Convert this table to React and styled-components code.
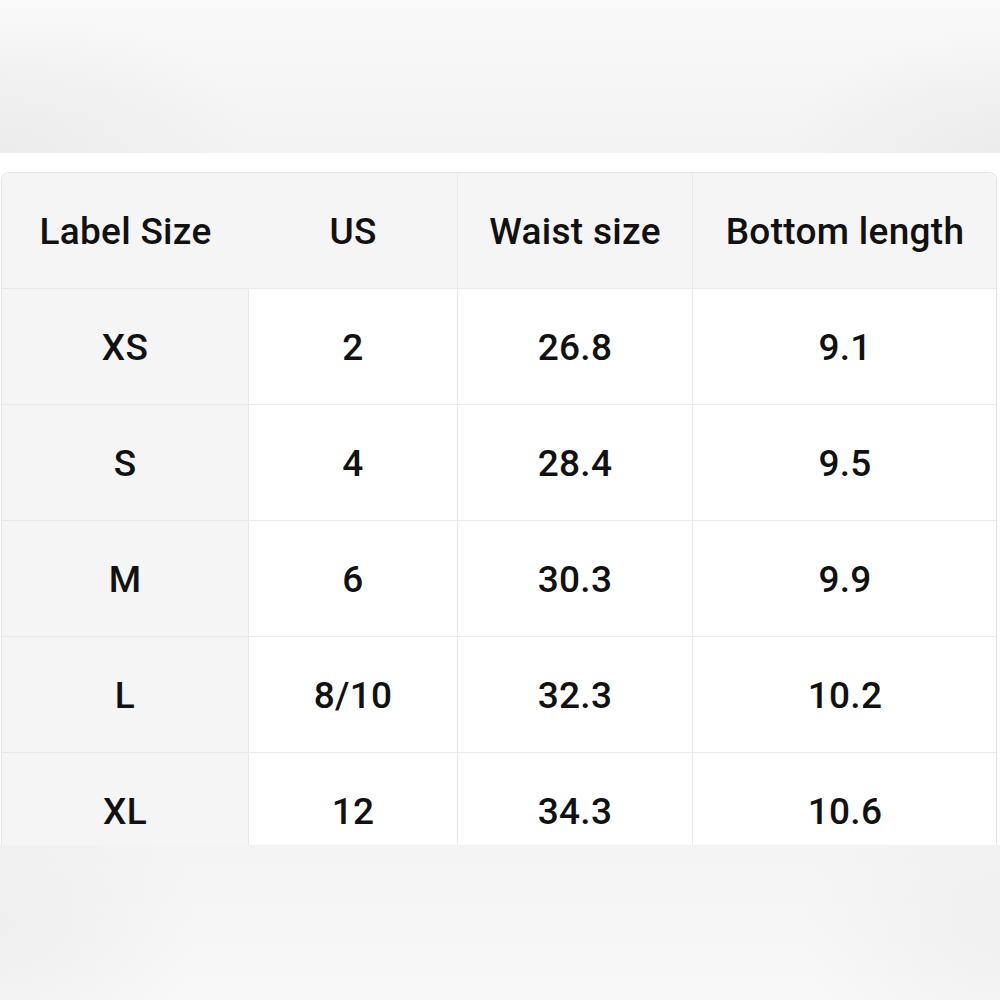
import React from "react";
import styled, { createGlobalStyle } from "styled-components";

const GlobalStyle = createGlobalStyle`
  html, body {
    margin: 0;
    padding: 0;
    background: #ffffff;
  }
  body {
    font-family: Roboto, Inter, "Liberation Sans", sans-serif;
    color: #111111;
  }
`;

const columns = ["Label Size", "US", "Waist size", "Bottom length"];

const rows = [
  ["XS", "2", "26.8", "9.1"],
  ["S", "4", "28.4", "9.5"],
  ["M", "6", "30.3", "9.9"],
  ["L", "8/10", "32.3", "10.2"],
  ["XL", "12", "34.3", "10.6"],
];

const App = () => (
  <Page>
    <GlobalStyle />
    <TopBand />
    <Gap />
    <TableWrap>
      <Table>
        {columns.map((col, i) => (
          <HeadCell key={col} $first={i === 0} $last={i === columns.length - 1}>
            {col}
          </HeadCell>
        ))}
        {rows.map((row, r) =>
          row.map((value, c) => (
            <Cell key={`${r}-${c}`} $first={c === 0} $last={c === row.length - 1}>
              {value}
            </Cell>
          ))
        )}
      </Table>
    </TableWrap>
    <BottomBand />
  </Page>
);

export default App;

const Page = styled.div`
  width: 1000px;
  height: 1000px;
  display: flex;
  flex-direction: column;
  overflow: hidden;
`;

const TopBand = styled.div`
  height: 153px;
  flex-shrink: 0;
  background:
    radial-gradient(ellipse 260px 140px at 0% 100%, #ececec, rgba(236,236,236,0)),
    radial-gradient(ellipse 220px 120px at 100% 100%, #ececec, rgba(236,236,236,0)),
    linear-gradient(#f9f9f9, #f3f3f3);
`;

const Gap = styled.div`
  height: 19px;
  flex-shrink: 0;
  background: #ffffff;
`;

const TableWrap = styled.div`
  height: 673px;
  flex-shrink: 0;
  overflow: hidden;
  padding: 0 3px 0 1px;
`;

const Table = styled.div`
  display: grid;
  grid-template-columns: 247px 209px 235px 304px;
  grid-auto-rows: 116px;
  border: 1px solid #e4e4e4;
  border-bottom: none;
  border-radius: 8px 8px 0 0;
  overflow: hidden;
`;

const BaseCell = styled.div`
  display: flex;
  align-items: center;
  justify-content: center;
  font-size: 37px;
  font-weight: 500;
  color: #111111;
  letter-spacing: 0.3px;
  box-sizing: border-box;
  border-right: ${(p) => (p.$last ? "none" : "1px solid #e9e9e9")};
  border-bottom: 1px solid #e9e9e9;
`;

const HeadCell = styled(BaseCell)`
  background: #f5f5f5;
  padding-top: 2px;
  border-right: ${(p) => (p.$last || p.$first ? "none" : "1px solid #e9e9e9")};
`;

const Cell = styled(BaseCell)`
  background: ${(p) => (p.$first ? "#f5f5f5" : "#ffffff")};
  padding-top: 2px;
`;

const BottomBand = styled.div`
  flex: 1;
  background:
    radial-gradient(ellipse 200px 160px at 0% 50%, #efefef, rgba(239,239,239,0)),
    radial-gradient(ellipse 200px 160px at 100% 50%, #f0f0f0, rgba(240,240,240,0)),
    linear-gradient(#f4f4f4, #f8f8f8);
`;
